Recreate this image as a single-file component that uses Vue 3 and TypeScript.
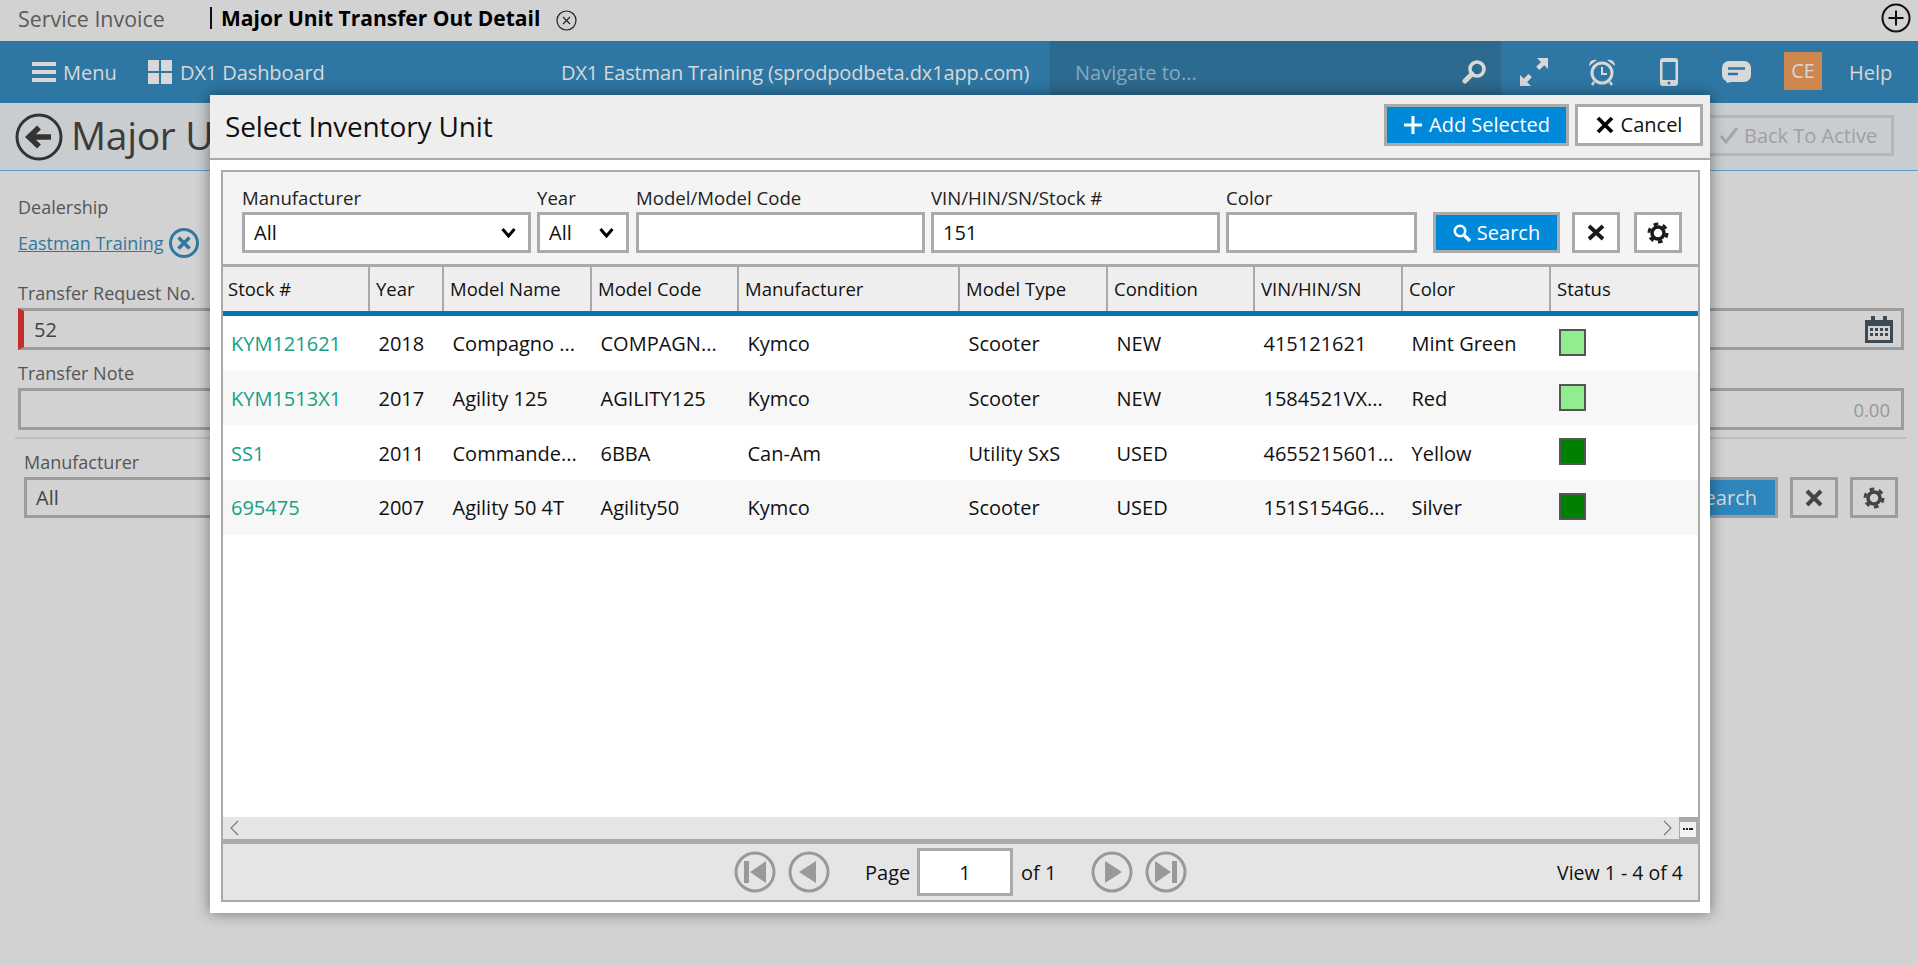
<script setup lang="ts">
interface Unit {
  stock: string
  year: string
  name: string
  code: string
  make: string
  type: string
  cond: string
  vin: string
  color: string
  status: string
}
const columns: { label: string; width: number }[] = [
  { label: 'Stock #', width: 147 },
  { label: 'Year', width: 74 },
  { label: 'Model Name', width: 148 },
  { label: 'Model Code', width: 147 },
  { label: 'Manufacturer', width: 221 },
  { label: 'Model Type', width: 148 },
  { label: 'Condition', width: 147 },
  { label: 'VIN/HIN/SN', width: 148 },
  { label: 'Color', width: 148 },
  { label: 'Status', width: 149 },
]
const gridCols = columns.map((c) => c.width + 'px').join(' ')
const units: Unit[] = [
  { stock: 'KYM121621', year: '2018', name: 'Compagno ...', code: 'COMPAGN...', make: 'Kymco', type: 'Scooter', cond: 'NEW', vin: '415121621', color: 'Mint Green', status: '#90ee90' },
  { stock: 'KYM1513X1', year: '2017', name: 'Agility 125', code: 'AGILITY125', make: 'Kymco', type: 'Scooter', cond: 'NEW', vin: '1584521VX...', color: 'Red', status: '#90ee90' },
  { stock: 'SS1', year: '2011', name: 'Commande...', code: '6BBA', make: 'Can-Am', type: 'Utility SxS', cond: 'USED', vin: '4655215601...', color: 'Yellow', status: '#008000' },
  { stock: '695475', year: '2007', name: 'Agility 50 4T', code: 'Agility50', make: 'Kymco', type: 'Scooter', cond: 'USED', vin: '151S154G6...', color: 'Silver', status: '#008000' },
]
</script>

<template>
  <div class="page">
    <div class="tabs">
      <span class="tab-a">Service Invoice</span>
      <span class="tab-bar"></span>
      <span class="tab-b">Major Unit Transfer Out Detail</span>
      <svg class="tab-x" width="21" height="21" viewBox="0 0 21 21"><circle cx="10.5" cy="10.5" r="9.5" fill="none" stroke="#222" stroke-width="1.2"/><path d="M7 7l7 7M14 7l-7 7" stroke="#222" stroke-width="1.2"/></svg>
      <svg class="tab-plus" width="30" height="30" viewBox="0 0 30 30"><circle cx="15" cy="15" r="13.5" fill="none" stroke="#111" stroke-width="2"/><path d="M15 7.5v15M7.500 15h15" stroke="#111" stroke-width="2"/></svg>
    </div>

    <div class="topbar">
      <svg class="i-burger" width="24" height="20" viewBox="0 0 24 20"><path d="M0 0h24v4H0zM0 8h24v4H0zM0 16h24v4H0z" fill="#d8d8d8"/></svg>
      <span class="t-menu">Menu</span>
      <svg class="i-win" width="24" height="24" viewBox="0 0 24 24"><path d="M0 0h11v11H0zM13 0h11v11H13zM0 13h11v11H0zM13 13h11v11H13z" fill="#d8d8d8"/></svg>
      <span class="t-dash">DX1 Dashboard</span>
      <span class="t-site">DX1 Eastman Training (sprodpodbeta.dx1app.com)</span>
      <div class="navto">
        <span>Navigate to...</span>
        <svg width="24" height="24" viewBox="0 0 24 24"><circle cx="15" cy="9" r="7" fill="none" stroke="#d8d8d8" stroke-width="3.600"/><path d="M10 14l-7 7" stroke="#d8d8d8" stroke-width="5" stroke-linecap="round"/></svg>
      </div>
      <svg class="i-exp" width="28" height="28" viewBox="0 0 28 28" fill="#d8d8d8"><path d="M17 0h11v11l-3.700-3.700-4.800 4.800-3.300-3.300 4.800-4.800zM0 28V17l3.800 3.800 4.800-4.800 3.300 3.300-4.800 4.800L11 28z"/></svg>
      <svg class="i-alarm" width="28" height="28" viewBox="0 0 28 28"><circle cx="14" cy="15" r="10" fill="none" stroke="#d8d8d8" stroke-width="3"/><path d="M14 9v7h5" fill="none" stroke="#d8d8d8" stroke-width="2"/><path d="M1 8a6 6 0 0 1 8-6zM27 8a6 6 0 0 0-8-6z" fill="#d8d8d8"/><path d="M6 24l-2 3M22 24l2 3" stroke="#d8d8d8" stroke-width="2.500"/></svg>
      <svg class="i-phone" width="18" height="28" viewBox="0 0 18 28"><path fill-rule="evenodd" d="M3 0h12a3 3 0 0 1 3 3v22a3 3 0 0 1-3 3H3a3 3 0 0 1-3-3V3a3 3 0 0 1 3-3zM2.500 4v18h13V4z" fill="#d8d8d8"/><circle cx="9" cy="25" r="1.500" fill="#2e77a4"/></svg>
      <svg class="i-chat" width="29" height="22" viewBox="0 0 29 22"><path d="M7 0h15a7 7 0 0 1 7 7v7a7 7 0 0 1-7 7H9l-4 1-1-2a7 7 0 0 1-4-6V7a7 7 0 0 1 7-7z" fill="#d8d8d8"/><path d="M6 7.500h17M6 13h10" stroke="#2e77a4" stroke-width="2.500"/></svg>
      <span class="ce">CE</span>
      <span class="t-help">Help</span>
    </div>

    <div class="pagehead">
      <svg class="i-back" width="48" height="48" viewBox="0 0 48 48"><circle cx="24" cy="24" r="22" fill="none" stroke="#333" stroke-width="3"/><path d="M36 24H17M24 14.500L14 24l10 9.500" fill="none" stroke="#333" stroke-width="5.500"/></svg>
      <h1>Major U</h1>
      <div class="backactive">
        <svg width="18" height="18" viewBox="0 0 18 18"><path d="M1 10l5 6L17 2" fill="none" stroke="#a3a6a8" stroke-width="3"/></svg>
        <span>Back To Active</span>
      </div>
    </div>

    <div class="form">
      <div class="lbl l-deal">Dealership</div>
      <div class="dealer">
        <a>Eastman Training</a>
        <svg width="30" height="30" viewBox="0 0 30 30"><circle cx="15" cy="15" r="13.500" fill="none" stroke="#30789f" stroke-width="3"/><path d="M9.500 9.500l11 11M20.500 9.500l-11 11" stroke="#30789f" stroke-width="3.500"/></svg>
      </div>
      <div class="lbl l-req">Transfer Request No.</div>
      <div class="field req">
        <span>52</span>
        <svg width="28" height="27" viewBox="0 0 28 27"><path d="M0 4h28v23H0z" fill="#3d4a55"/><path d="M3 10h22v14H3z" fill="#d2d2d2"/><path d="M6 0h4v6H6zM18 0h4v6h-4z" fill="#3d4a55"/><path d="M5 12h3v3H5zM10 12h3v3h-3zM15 12h3v3h-3zM20 12h3v3h-3zM5 17h3v3H5zM10 17h3v3h-3zM15 17h3v3h-3zM20 17h3v3h-3z" fill="#3d4a55"/></svg>
      </div>
      <div class="lbl l-note">Transfer Note</div>
      <div class="field note"><span>0.00</span></div>
      <div class="rule"></div>
      <div class="lbl l-man">Manufacturer</div>
      <div class="row3">
        <div class="field sel">All</div>
        <div class="bgsearch">Search</div>
        <div class="bgbtn"><svg width="18" height="18" viewBox="0 0 18 18"><path d="M2 2l14 14M16 2L2 16" stroke="#444" stroke-width="4"/></svg></div>
        <div class="bgbtn"><svg width="22" height="22" viewBox="0 0 22 22"><circle cx="11" cy="11" r="6" fill="none" stroke="#444" stroke-width="3.500"/><circle cx="11" cy="11" r="9" fill="none" stroke="#444" stroke-width="3" stroke-dasharray="4.710 4.710"/></svg></div>
      </div>
    </div>

    <div class="modal">
      <div class="m-head">
        <h2>Select Inventory Unit</h2>
        <button class="btn primary add">
          <svg width="20" height="18" viewBox="0 0 20 18"><path d="M10 0v18M1 9h18" stroke="#fff" stroke-width="3"/></svg>
          <span>Add Selected</span>
        </button>
        <button class="btn cancel">
          <svg width="18" height="18" viewBox="0 0 18 18"><path d="M2 2l14 14M16 2L2 16" stroke="#000" stroke-width="3.800"/></svg>
          <span>Cancel</span>
        </button>
      </div>
      <div class="m-body">
        <div class="box">
          <div class="filters">
            <div class="fld w-man">
              <label>Manufacturer</label>
              <div class="inp">
                <span>All</span>
                <svg width="15" height="12" viewBox="0 0 15 12"><path d="M1.500 2l6 7 6-7" fill="none" stroke="#000" stroke-width="3"/></svg>
              </div>
            </div>
            <div class="fld w-year">
              <label>Year</label>
              <div class="inp">
                <span>All</span>
                <svg width="15" height="12" viewBox="0 0 15 12"><path d="M1.500 2l6 7 6-7" fill="none" stroke="#000" stroke-width="3"/></svg>
              </div>
            </div>
            <div class="fld w-model">
              <label>Model/Model Code</label>
              <div class="inp"></div>
            </div>
            <div class="fld w-vin">
              <label>VIN/HIN/SN/Stock #</label>
              <div class="inp"><span>151</span></div>
            </div>
            <div class="fld w-color">
              <label>Color</label>
              <div class="inp"></div>
            </div>
            <button class="btn primary search">
              <svg width="18" height="18" viewBox="0 0 18 18"><circle cx="7" cy="7" r="5.200" fill="none" stroke="#fff" stroke-width="2.600"/><path d="M11 11l6 6" stroke="#fff" stroke-width="3.400"/></svg>
              <span>Search</span>
            </button>
            <button class="btn square sq-x">
              <svg width="18" height="17" viewBox="0 0 18 17"><path d="M2 2l14 13M16 2L2 15" stroke="#1a1a1a" stroke-width="3.800"/></svg>
            </button>
            <button class="btn square">
              <svg width="22" height="22" viewBox="0 0 22 22"><circle cx="11" cy="11" r="6" fill="none" stroke="#1a1a1a" stroke-width="3.500"/><circle cx="11" cy="11" r="9" fill="none" stroke="#1a1a1a" stroke-width="3" stroke-dasharray="4.710 4.710"/></svg>
            </button>
          </div>

          <div class="g-head" :style="{ gridTemplateColumns: gridCols }">
            <div v-for="c in columns" :key="c.label" class="g-h">{{ c.label }}</div>
          </div>
          <div class="g-body">
            <div v-for="u in units" :key="u.stock" class="g-row" :style="{ gridTemplateColumns: gridCols }">
              <div class="c stock">{{ u.stock }}</div>
              <div class="c">{{ u.year }}</div>
              <div class="c">{{ u.name }}</div>
              <div class="c">{{ u.code }}</div>
              <div class="c">{{ u.make }}</div>
              <div class="c">{{ u.type }}</div>
              <div class="c">{{ u.cond }}</div>
              <div class="c">{{ u.vin }}</div>
              <div class="c">{{ u.color }}</div>
              <div class="c"><i class="swatch" :style="{ background: u.status }"></i></div>
            </div>
          </div>
          <div class="hscroll">
            <svg class="arrow" width="9" height="16" viewBox="0 0 9 16"><path d="M8 1L1 8l7 7" fill="none" stroke="#777" stroke-width="1.100"/></svg>
            <svg class="arrow r" width="9" height="16" viewBox="0 0 9 16"><path d="M1 1l7 7-7 7" fill="none" stroke="#777" stroke-width="1.100"/></svg>
            <div class="corner"><b></b></div>
          </div>
          <div class="pager">
            <svg class="pg p1" width="42" height="42" viewBox="0 0 42 42"><circle cx="21" cy="21" r="19" fill="none" stroke="#999" stroke-width="3"/><path d="M10 10h5v22h-5zM32 10v22L16 21z" fill="#999"/></svg>
            <svg class="pg p2" width="42" height="42" viewBox="0 0 42 42"><circle cx="21" cy="21" r="19" fill="none" stroke="#999" stroke-width="3"/><path d="M28 10v22L11 21z" fill="#999"/></svg>
            <span class="p-page">Page</span>
            <div class="p-inp">1</div>
            <span class="p-of">of 1</span>
            <svg class="pg p3" width="42" height="42" viewBox="0 0 42 42"><circle cx="21" cy="21" r="19" fill="none" stroke="#999" stroke-width="3"/><path d="M14 10v22l17-11z" fill="#999"/></svg>
            <svg class="pg p4" width="42" height="42" viewBox="0 0 42 42"><circle cx="21" cy="21" r="19" fill="none" stroke="#999" stroke-width="3"/><path d="M10 10v22l16-11zM27 10h5v22h-5z" fill="#999"/></svg>
            <span class="p-view">View 1 - 4 of 4</span>
          </div>
        </div>
      </div>
    </div>
  </div>
</template>

<style>
html, body { margin: 0; height: 100%; overflow: hidden; }
</style>

<style scoped>
.page {
  position: relative;
  width: 1918px;
  height: 965px;
  overflow: hidden;
  background: #d2d2d2;
  font-family: "Open Sans", "Noto Sans", sans-serif;
  font-size: 20px;
  color: #555;
}
.tabs { height: 41px; box-sizing: border-box; padding-bottom: 5px; display: flex; align-items: center; }
.tab-a { width: 210px; padding-left: 18px; box-sizing: border-box; font-size: 21.4px; color: #5a5a5a; flex: none; }
.tab-bar { width: 2px; height: 22px; background: #111; flex: none; }
.tab-b { margin-left: 9px; font-size: 21px; font-weight: 700; color: #000; white-space: nowrap; }
.tab-x { margin: 4px 0 0 16px; }
.tab-plus { margin-left: auto; margin-right: 7px; }

.topbar { height: 62px; background: #2e77a4; display: flex; align-items: center; color: #d8d8d8; font-size: 20px; white-space: nowrap; }
.i-burger { margin-left: 32px; flex: none; }
.t-menu { margin-left: 7px; width: 85px; flex: none; }
.i-win { flex: none; }
.t-dash { margin-left: 8px; width: 381px; flex: none; letter-spacing: -0.1px; }
.t-site { width: 489px; flex: none; letter-spacing: -0.13px; }
.navto { width: 451px; height: 100%; flex: none; background: #2d6a8f; display: flex; align-items: center; justify-content: space-between; padding: 0 15px 0 25px; box-sizing: border-box; color: #86a9bf; }
.i-exp { margin-left: 19px; flex: none; }
.i-alarm { margin-left: 40px; flex: none; }
.i-phone { margin-left: 44px; flex: none; }
.i-chat { margin-left: 44px; flex: none; }
.ce { margin-left: 33px; width: 38px; height: 38px; background: #cd864d; display: flex; align-items: center; justify-content: center; flex: none; margin-top: -3px; }
.t-help { margin-left: 27px; }

.pagehead { height: 67px; background: #c9cdd0; border-bottom: 1px solid #5c9ccb; display: flex; align-items: center; position: relative; box-sizing: content-box; }
.i-back { margin-left: 15px; flex: none; }
.pagehead h1 { margin: -4px 0 0 8px; font-size: 39px; font-weight: 400; color: #3c3c3c; white-space: nowrap; letter-spacing: -0.3px; }
.backactive { margin: -3px 24px 0 auto; width: 200px; height: 41px; box-sizing: border-box; border: 3px solid #b5b8ba; display: flex; align-items: center; gap: 6px; padding-left: 23px; color: #a0a0a0; white-space: nowrap; }

.form { padding: 0 14px 0 18px; }
.lbl { color: #555; font-size: 18px; }
.l-deal { margin-top: 24px; height: 25px; line-height: 25px; }
.dealer { display: flex; align-items: center; gap: 5px; height: 30px; margin-top: 8px; font-size: 18px; }
.dealer a { color: #30789f; text-decoration: underline; }
.l-req { margin-top: 23px; height: 25px; line-height: 25px; }
.field { height: 42px; box-sizing: border-box; border: 3px solid #9c9c9c; display: flex; align-items: center; color: #444; }
.req { margin-top: 2px; border-left: 6px solid #c62d2d; padding: 0 8px 0 10px; justify-content: space-between; }
.l-note { margin-top: 11px; height: 25px; line-height: 25px; }
.note { margin-top: 2px; justify-content: flex-end; padding-right: 11px; color: #979797; font-size: 18.5px; }
.rule { height: 2px; background: #bdbdbd; margin: 7px 0 0 -3px; width: 1891px; }
.l-man { margin: 11px 0 0 6px; height: 25px; line-height: 25px; }
.row3 { display: flex; margin: 2px 0 0 6px; }
.sel { width: 300px; padding-left: 9px; height: 41px; }
.bgsearch { margin-left: 1254px; width: 200px; height: 41px; box-sizing: border-box; border: 3px solid #9c9c9c; background: #2e86bc; color: #d8d8d8; display: flex; align-items: center; justify-content: flex-end; padding-right: 18px; }
.bgbtn { margin-left: 12px; width: 48px; height: 41px; box-sizing: border-box; border: 3px solid #9c9c9c; display: flex; align-items: center; justify-content: center; }

.modal { position: absolute; left: 210px; top: 95px; width: 1500px; height: 818px; background: #fff; box-shadow: 0 0 14px rgba(0, 0, 0, 0.45); display: flex; flex-direction: column; color: #111; }
.m-head { height: 63px; flex: none; background: #eee; border-bottom: 2px solid #aaa; display: flex; align-items: center; padding-left: 15px; }
.m-head h2 { margin: -2px 0 0; font-size: 28px; font-weight: 400; color: #111; letter-spacing: -0.15px; flex: 1; }
.btn { box-sizing: border-box; border: 3px solid #aaa; background: #fff; display: flex; align-items: center; justify-content: center; padding: 0; font: inherit; color: #111; }
.primary { background: #0089d9; color: #fff; }
.add { width: 185px; height: 42px; gap: 6px; margin-top: -4px; }
.cancel { width: 128px; height: 42px; gap: 7px; margin: -4px 7px 0 6px; }
.m-body { flex: 1; padding: 10px 10px 11px 11px; display: flex; min-height: 0; }
.box { flex: 1; border: 2px solid #aaa; display: flex; flex-direction: column; background: #fff; min-width: 0; }
.filters { background: #f4f4f4; border-bottom: 3px solid #aaa; box-sizing: content-box; display: flex; align-items: flex-end; padding: 0 0 11px 19px; height: 81px; flex: none; }
.fld { display: flex; flex-direction: column; }
.fld label { height: 24px; line-height: 24px; margin-bottom: 2px; color: #222; font-size: 18.6px; white-space: nowrap; }
.inp { height: 41px; box-sizing: border-box; border: 3px solid #aaa; background: #fff; display: flex; align-items: center; justify-content: space-between; padding: 0 12px 0 9px; color: #111; }
.w-man { width: 289px; margin-right: 6px; }
.w-year { width: 92px; margin-right: 7px; }
.w-model { width: 289px; margin-right: 6px; }
.w-vin { width: 289px; margin-right: 6px; }
.w-color { width: 191px; margin-right: 16px; }
.search { width: 127px; height: 41px; gap: 6px; }
.square { width: 48px; height: 41px; margin-left: 14px; }
.sq-x { margin-left: 12px; }

.g-head { display: grid; height: 44px; flex: none; background: #eee; border-bottom: 5px solid #0275b8; box-sizing: content-box; }
.g-h { border-right: 2px solid #aaa; padding: 0 0 2px 6px; display: flex; align-items: center; color: #111; white-space: nowrap; font-size: 18.5px; }
.g-h:first-child { padding-left: 5px; }
.g-h:last-child { border-right: 0; }
.g-body { flex: 1; min-height: 0; }
.g-row { display: grid; height: 54.7px; }
.g-row:nth-child(even) { background: #f7f7f7; }
.c { padding: 1px 0 0 8.5px; display: flex; align-items: center; white-space: nowrap; color: #111; }
.c.stock { color: #16a085; padding-left: 8px; }
.swatch { width: 27px; height: 27px; box-sizing: border-box; border: 2px solid #555; display: block; margin: -3px 0 0 -0.5px; }

.hscroll { height: 22px; flex: none; background: #e5e5e5; display: flex; align-items: center; position: relative; padding: 0 19px 0 7px; justify-content: space-between; }
.arrow.r { margin-right: 7px; }
.corner { position: absolute; right: 0; top: 0; bottom: 0; width: 19px; background: #aaa; }
.corner b { position: absolute; left: 1px; top: 5px; width: 16px; height: 15px; background: #f2f2f2; }
.corner b::after { content: ""; position: absolute; left: 3px; top: 6px; width: 2px; height: 2px; background: #222; box-shadow: 3px 0 0 #222, 6px 0 0 #222, 8px 0 0 #222; }
.pager { flex: none; background: #e5e5e5; border-top: 5px solid #aaa; display: flex; align-items: center; box-sizing: content-box; color: #111; padding-left: 511px; height: 56px; }
.pg { flex: none; }
.p2 { margin-left: 12px; }
.p-page { margin-left: 35px; width: 52px; }
.p-inp { width: 96px; height: 48px; box-sizing: border-box; border: 3px solid #aaa; background: #fff; display: flex; align-items: center; justify-content: center; flex: none; }
.p-of { margin-left: 8px; width: 70px; flex: none; }
.p3 { margin-left: 0; }
.p4 { margin-left: 12px; }
.p-view { margin-left: auto; margin-right: 15px; white-space: nowrap; font-size: 19.5px; }
</style>
